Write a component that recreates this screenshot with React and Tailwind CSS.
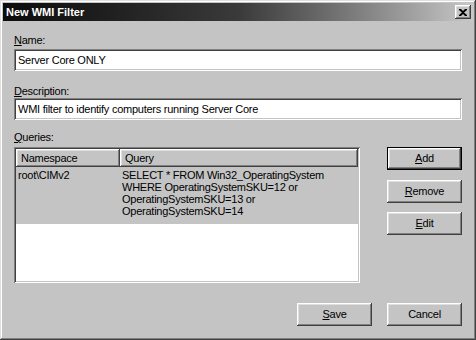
import React from "react";

const raised =
  "shadow-[inset_-1px_-1px_0_#404040,inset_1px_1px_0_#ffffff,inset_-2px_-2px_0_#808080,inset_2px_2px_0_#dfdfdf]";
const sunken =
  "shadow-[inset_1px_1px_0_#808080,inset_-1px_-1px_0_#ffffff,inset_2px_2px_0_#404040,inset_-2px_-2px_0_#c4c4c4]";

function Btn({ children, isDefault, className = "" }) {
  return (
    <div className={`w-[75px] h-[23px] ${isDefault ? "border border-black" : ""} ${className}`}>
      <div className={`w-full h-full flex items-center justify-center bg-[#c4c4c4] ${raised}`}>
        <span className="text-[11px] text-black leading-none">{children}</span>
      </div>
    </div>
  );
}

function TextBox({ value }) {
  return (
    <div className={`h-[22px] bg-white flex items-center px-[4px] ${sunken}`}>
      <span className="text-[11px] text-black">{value}</span>
    </div>
  );
}

export default function App() {
  const query = [
    "SELECT * FROM Win32_OperatingSystem",
    "WHERE OperatingSystemSKU=12 or",
    "OperatingSystemSKU=13 or",
    "OperatingSystemSKU=14",
  ];

  return (
    <div
      className="w-[476px] h-[340px] bg-[#c4c4c4] p-[3px] flex flex-col tracking-[-0.25px] shadow-[inset_-1px_-1px_0_#404040,inset_1px_1px_0_#dfdfdf,inset_-2px_-2px_0_#808080,inset_2px_2px_0_#ffffff]"
      style={{ fontFamily: '"Liberation Sans", Arial, sans-serif' }}
    >
      {/* title bar */}
      <div className="h-[18px] flex items-center justify-between pl-[3px] pr-[2px] bg-gradient-to-r from-[#0c0c0c] via-[#3a3a3a] to-[#c8c8c8]">
        <span className="text-[11px] font-bold text-white tracking-normal">New WMI Filter</span>
        <div className={`w-[16px] h-[14px] flex items-center justify-center bg-[#c4c4c4] ${raised}`}>
          <svg width="8" height="7" viewBox="0 0 8 7">
            <path d="M0 0h2l2 2 2-2h2v1L5 3.5 8 6v1H6L4 5 2 7H0V6l3-2.5L0 1z" fill="#000" />
          </svg>
        </div>
      </div>

      <div className="flex-1 flex flex-col px-[11px]">
        <div className="mt-[12px] text-[11px] leading-[14px] h-[14px] text-black">
          <u>N</u>ame:
        </div>
        <div className="mt-[2px]">
          <TextBox value="Server Core ONLY" />
        </div>

        <div className="mt-[13px] text-[11px] leading-[14px] h-[14px] text-black">
          <u>D</u>escription:
        </div>
        <TextBox value="WMI filter to identify computers running Server Core" />

        <div className="mt-[10px] text-[11px] leading-[14px] h-[14px] text-black">
          <u>Q</u>ueries:
        </div>

        <div className="mt-[3px] flex">
          {/* list view */}
          <div className={`w-[346px] h-[136px] bg-white p-[2px] flex flex-col ${sunken}`}>
            <div className="h-[18px] flex shrink-0">
              <div className={`w-[104px] h-full flex items-center px-[5px] bg-[#c4c4c4] ${raised}`}>
                <span className="text-[11px] text-black">Namespace</span>
              </div>
              <div className={`w-[238px] h-full flex items-center px-[5px] bg-[#c4c4c4] ${raised}`}>
                <span className="text-[11px] text-black">Query</span>
              </div>
            </div>
            <div className="h-[57px] bg-[#c4c4c4] flex pt-[2px]">
              <div className="w-[104px] pl-[2px] text-[11px] leading-[12px] text-black">root\CIMv2</div>
              <div className="pl-[2px] text-[11px] leading-[12px] text-black">
                {query.map((l, i) => (
                  <div key={i}>{l}</div>
                ))}
              </div>
            </div>
          </div>

          <div className="ml-[27px] flex flex-col">
            <Btn isDefault>
              <u>A</u>dd
            </Btn>
            <Btn className="mt-[10px]">
              <u>R</u>emove
            </Btn>
            <Btn className="mt-[9px]">
              <u>E</u>dit
            </Btn>
          </div>
        </div>

        <div className="mt-[20px] flex justify-end gap-[15px]">
          <Btn>
            <u>S</u>ave
          </Btn>
          <Btn>Cancel</Btn>
        </div>
      </div>
    </div>
  );
}
